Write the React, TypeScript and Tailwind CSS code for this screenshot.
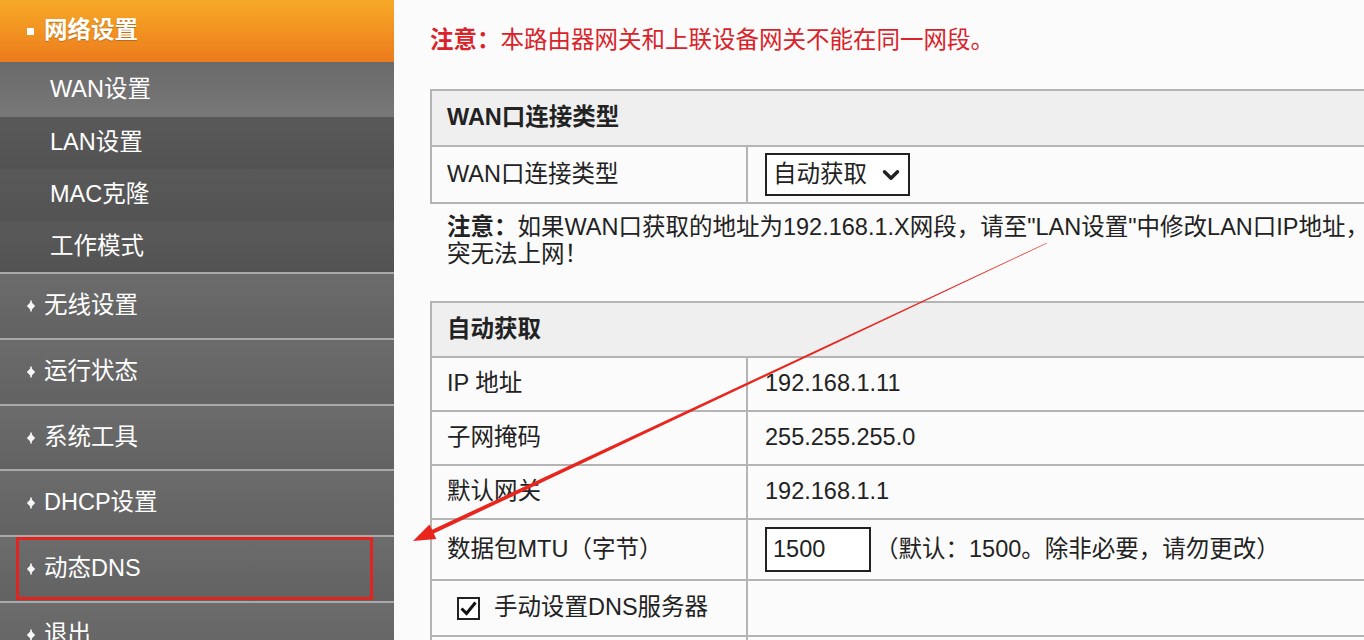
import { FC } from 'react';
import { ChevronDown } from 'lucide-react';

const font = "font-['Liberation_Sans','Noto_Sans_CJK_SC',sans-serif]";

const subItems = [
  { label: 'WAN设置', h: 'h-[55px]', active: true },
  { label: 'LAN设置', h: 'h-[52px]', active: false },
  { label: 'MAC克隆', h: 'h-[52px]', active: false },
  { label: '工作模式', h: 'h-[51px]', active: false },
];

const mainItems = ['无线设置', '运行状态', '系统工具', 'DHCP设置', '动态DNS', '退出'];

const Bullet: FC = () => (
  <svg width="10" height="12" viewBox="0 0 10 12" className="shrink-0">
    <rect x="4.2" y="0.5" width="1.6" height="11" fill="#f6f6f6" />
    <polygon points="5,1.8 9.2,6 5,10.2 0.8,6" fill="#f6f6f6" />
  </svg>
);

const Sidebar: FC = () => (
  <aside className="flex w-[394px] shrink-0 flex-col bg-[#646464] text-white">
    <div className="flex h-[62px] shrink-0 items-center gap-[10px] bg-gradient-to-b from-[#f6a926] to-[#ec7b1d] pl-[27px]">
      <span className="h-[7px] w-[7px] bg-white" />
      <span className="text-[23.5px] font-bold [text-shadow:0_1px_1px_rgba(0,0,0,0.25)]">网络设置</span>
    </div>
    {subItems.map(item => (
      <div
        key={item.label}
        className={`flex shrink-0 items-center pl-[50px] text-[23.5px] ${item.h} ${
          item.active
            ? 'bg-gradient-to-b from-[#6a6a6a] to-[#787878]'
            : 'bg-gradient-to-b from-[#595959] to-[#535353]'
        }`}
      >
        {item.label}
      </div>
    ))}
    {mainItems.map((label, i) => (
      <div
        key={label}
        className={`relative flex shrink-0 items-center gap-[8px] border-t-2 border-[#a9a9a9] bg-gradient-to-b from-[#6c6c6c] to-[#626262] pl-[26px] text-[23.5px] ${
          i === 2 ? 'h-[65px]' : 'h-[66px]'
        }`}
      >
        <Bullet />
        <span>{label}</span>
        {label === '动态DNS' && (
          <span className="absolute bottom-[1px] left-[16px] right-[21px] top-[0px] border-[3px] border-[#e3231d]" />
        )}
      </div>
    ))}
  </aside>
);

const Row: FC<{ label: React.ReactNode; h: string; children?: React.ReactNode }> = ({ label, h, children }) => (
  <div className={`flex border-t-2 border-[#b4b4b4] ${h}`}>
    <div className="flex w-[316px] shrink-0 items-center border-r-2 border-[#b4b4b4] pl-[15px]">{label}</div>
    <div className="flex flex-1 items-center pl-[17px]">{children}</div>
  </div>
);

const Content: FC = () => (
  <main className="flex-1 bg-[#fbfbfb] pl-[36px] pt-[24px] text-[#222]">
    <p className="whitespace-nowrap text-[23.5px] leading-[32px] text-[#d9232a]">
      <b>注意：</b>本路由器网关和上联设备网关不能在同一网段。
    </p>

    <div className="mt-[33px] w-[1100px] border-2 border-[#b4b4b4]">
      <div className="flex h-[54px] items-center bg-[#efefef] pl-[15px] font-bold">WAN口连接类型</div>
      <Row label="WAN口连接类型" h="h-[57px]">
        <div className="flex h-[43px] w-[145px] items-center justify-between border-2 border-[#222] bg-white pl-[6px] pr-[4px]">
          <span>自动获取</span>
          <ChevronDown size={26} strokeWidth={3.2} />
        </div>
      </Row>
    </div>

    <p className="mt-[10px] whitespace-nowrap pl-[17px] text-[23.5px] leading-[27px]">
      <b>注意：</b>如果WAN口获取的地址为192.168.1.X网段，请至"LAN设置"中修改LAN口IP地址，否则会冲
      <br />
      突无法上网！
    </p>

    <div className="mt-[33px] w-[1100px] border-x-2 border-t-2 border-[#b4b4b4]">
      <div className="flex h-[53px] items-center bg-[#efefef] pl-[15px] font-bold">自动获取</div>
      <Row label="IP 地址" h="h-[54px]">192.168.1.11</Row>
      <Row label="子网掩码" h="h-[54px]">255.255.255.0</Row>
      <Row label="默认网关" h="h-[54px]">192.168.1.1</Row>
      <Row label="数据包MTU（字节）" h="h-[61px]">
        <div className="flex h-[45px] w-[106px] items-center border-2 border-[#222] bg-white pl-[6px]">1500</div>
        <span className="ml-[4px]">（默认：1500。除非必要，请勿更改）</span>
      </Row>
      <Row
        h="h-[56px]"
        label={
          <span className="flex items-center gap-[14px] pl-[10px]">
            <span className="flex h-[23px] w-[23px] items-center justify-center border-2 border-[#222] bg-white">
              <svg width="17" height="15" viewBox="0 0 17 15">
                <path d="M1.5 7.5 L6.5 12.5 L15.5 1.5" fill="none" stroke="#111" strokeWidth="3" />
              </svg>
            </span>
            手动设置DNS服务器
          </span>
        }
      />
      <Row label="" h="h-[40px]">
        <div className="mt-[8px] h-[40px] w-[224px] self-start border-2 border-[#222] bg-white" />
      </Row>
    </div>
  </main>
);

// annotation arrow drawn over the screenshot
const Arrow: FC = () => (
  <svg className="pointer-events-none absolute left-0 top-0" width="1364" height="640" viewBox="0 0 1364 640">
    <polygon
      points="1047.1,243.3 433.8,533.5 436.3,538.9 413,541 429.5,524.4 432.1,529.8 1046.9,242.7"
      fill="#e8261e"
    />
  </svg>
);

const App: FC = () => (
  <div className={`relative flex h-[640px] w-[1364px] overflow-hidden text-[23.5px] ${font}`}>
    <Sidebar />
    <Content />
    <Arrow />
  </div>
);

export default App;
